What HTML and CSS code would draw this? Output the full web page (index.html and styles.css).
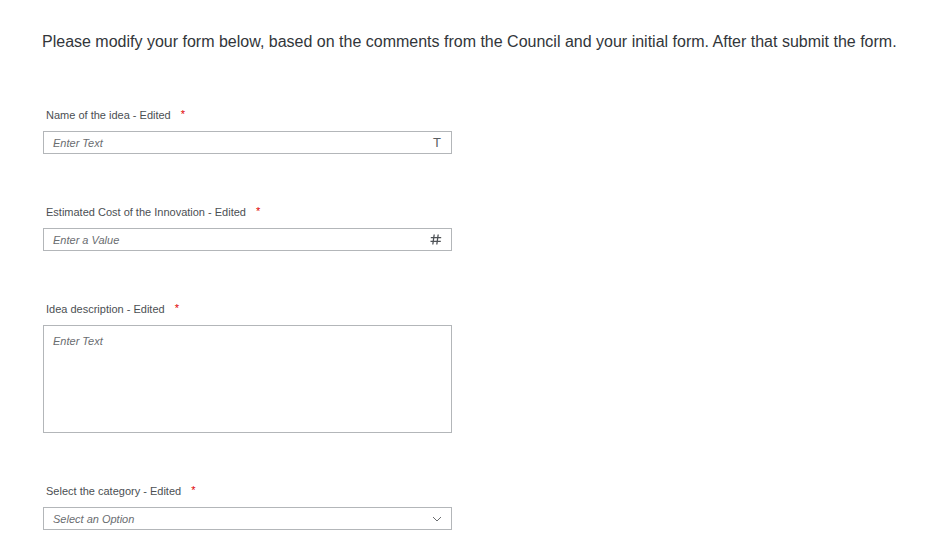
FILE: index.html
```html
<!DOCTYPE html>
<html lang="en">
<head>
<meta charset="utf-8">
<title>Form</title>
<link rel="stylesheet" href="styles.css">
</head>
<body>
<div class="page">
  <p class="intro">Please modify your form below, based on the comments from the Council and your initial form. After that submit the form.</p>
  <form class="form">
    <div class="field">
      <label class="label">Name of the idea - Edited <span class="req">*</span></label>
      <div class="input">
        <span class="placeholder">Enter Text</span>
        <span class="icon icon-t">T</span>
      </div>
    </div>
    <div class="field">
      <label class="label">Estimated Cost of the Innovation - Edited <span class="req">*</span></label>
      <div class="input">
        <span class="placeholder">Enter a Value</span>
        <span class="icon icon-hash">
          <svg width="12" height="11" viewBox="0 0 12 11"><path d="M4.2 0.5 L2.8 10.5 M8.2 0.5 L6.8 10.5 M0.8 3.6 H11.2 M0.5 7.3 H10.8" stroke="#4f5357" stroke-width="1.3" fill="none"/></svg>
        </span>
      </div>
    </div>
    <div class="field">
      <label class="label">Idea description - Edited <span class="req">*</span></label>
      <div class="textarea">
        <span class="placeholder">Enter Text</span>
      </div>
    </div>
    <div class="field">
      <label class="label">Select the category - Edited <span class="req">*</span></label>
      <div class="input">
        <span class="placeholder">Select an Option</span>
        <span class="icon icon-chev">
          <svg width="10" height="6" viewBox="0 0 10 6"><path d="M1 1 L5 5 L9 1" stroke="#6a6d70" stroke-width="1" fill="none"/></svg>
        </span>
      </div>
    </div>
  </form>
</div>
</body>
</html>
```

FILE: styles.css
```css
html, body {
  margin: 0;
  padding: 0;
  background: #ffffff;
}

.page {
  padding: 33px 0 0 42px;
  font-family: "Liberation Sans", Arial, sans-serif;
  color: #32363a;
}

.intro {
  margin: 0;
  font-size: 16px;
  line-height: 18px;
  color: #32363a;
}

.form {
  display: flex;
  flex-direction: column;
  gap: 51px;
  margin-top: 57px;
  width: 410px;
}

.field {
  display: flex;
  flex-direction: column;
}

.label {
  display: flex;
  align-items: center;
  height: 14px;
  font-size: 11px;
  line-height: 14px;
  color: #4b4f53;
  padding-left: 4px;
  margin-bottom: 9px;
  white-space: pre;
}

.req {
  color: #e00000;
  font-size: 11px;
  line-height: 14px;
  margin-left: 7px;
  position: relative;
  top: -1px;
}

.input {
  box-sizing: border-box;
  height: 23px;
  width: 409px;
  margin-left: 1px;
  border: 1px solid #b3b6b9;
  display: flex;
  align-items: center;
  justify-content: space-between;
  padding: 0 9px 0 9px;
}

.textarea {
  box-sizing: border-box;
  height: 108px;
  width: 409px;
  margin-left: 1px;
  border: 1px solid #b3b6b9;
  padding: 7px 9px;
  line-height: 14px;
}

.placeholder {
  font-size: 11px;
  font-style: italic;
  color: #6a6d70;
}

.icon {
  display: flex;
  align-items: center;
  color: #5a5e62;
}

.icon-t {
  font-size: 13px;
  font-weight: normal;
  margin-right: 1px;
}
```
